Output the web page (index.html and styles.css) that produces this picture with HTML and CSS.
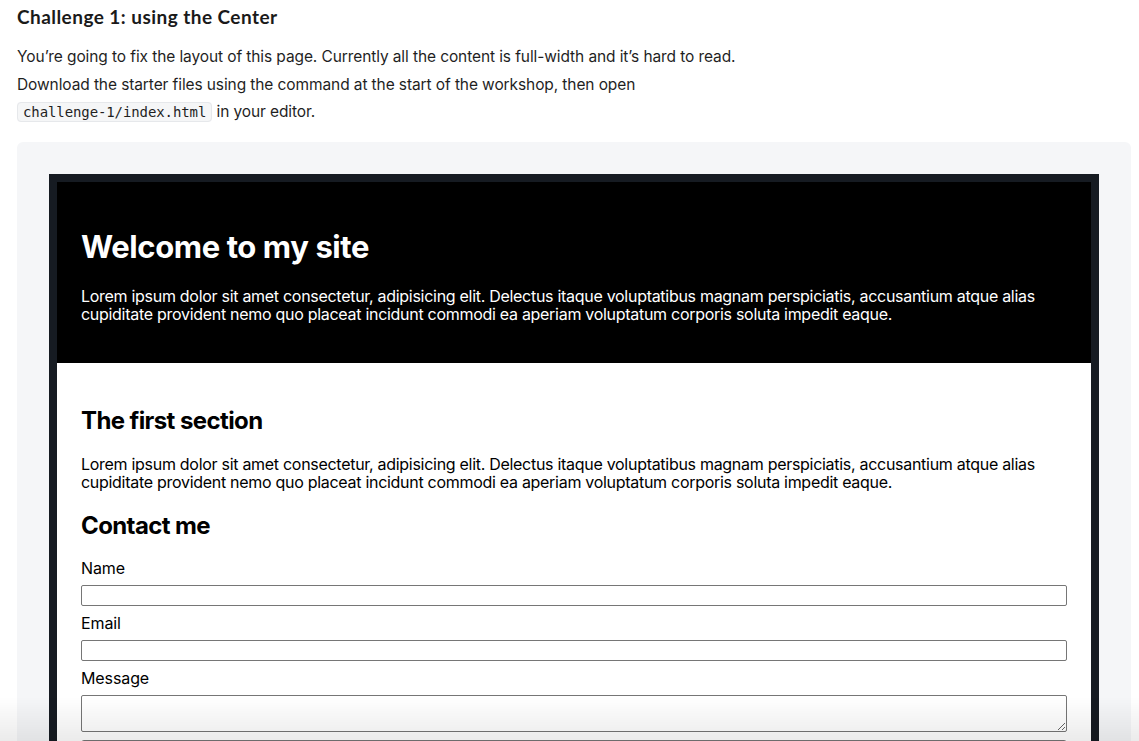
FILE: index.html
```html
<!DOCTYPE html>
<html lang="en">
<head>
<meta charset="utf-8">
<title>Challenge 1</title>
<link rel="stylesheet" href="styles.css">
</head>
<body>
<div class="page">
  <h3 class="title">Challenge 1: using the Center</h3>
  <p class="intro">You’re going to fix the layout of this page. Currently all the content is full-width and it’s hard to read.<br>Download the starter files using the command at the start of the workshop, then open<br><code>challenge-1/index.html</code> in your editor.</p>
  <div class="demo">
    <div class="frame">
      <header class="site-header">
        <h1>Welcome to my site</h1>
        <p>Lorem ipsum dolor sit amet consectetur, adipisicing elit. Delectus itaque voluptatibus magnam perspiciatis, accusantium atque alias cupiditate provident nemo quo placeat incidunt commodi ea aperiam voluptatum corporis soluta impedit eaque.</p>
      </header>
      <main class="site-main">
        <h2>The first section</h2>
        <p>Lorem ipsum dolor sit amet consectetur, adipisicing elit. Delectus itaque voluptatibus magnam perspiciatis, accusantium atque alias cupiditate provident nemo quo placeat incidunt commodi ea aperiam voluptatum corporis soluta impedit eaque.</p>
        <h2>Contact me</h2>
        <form class="form">
          <label for="name">Name</label>
          <input id="name" type="text">
          <label for="email">Email</label>
          <input id="email" type="email">
          <label for="msg">Message</label>
          <textarea id="msg"></textarea>
          <button type="button" class="send" aria-label="Send"></button>
        </form>
      </main>
    </div>
  </div>
</div>
<div class="fade"></div>
</body>
</html>
```
FILE: styles.css
```css
html, body {
  margin: 0;
  padding: 0;
  background: #ffffff;
  overflow: hidden;
}
.page {
  padding: 0 8px 0 17px;
  font-family: Inter, "Liberation Sans", sans-serif;
  color: #1f2328;
}
.title {
  margin: 5px 0 0;
  font-family: Lato, "Open Sans", sans-serif;
  font-weight: 700;
  font-size: 19px;
  line-height: 24px;
  letter-spacing: 0.45px;
  color: #1a1a1a;
}
.intro {
  margin: 14px 0 0;
  font-size: 15.5px;
  line-height: 27.5px;
  letter-spacing: -0.1px;
  color: #1f1f1f;
}
.intro code {
  font-family: "DejaVu Sans Mono", monospace;
  font-size: 14px;
  background: #f5f6f7;
  border: 1px solid #e6e8eb;
  border-radius: 4px;
  padding: 1px 5px;
}
.demo {
  margin-top: 15px;
  background: #f5f6f8;
  border-radius: 6px;
  padding: 32px;
  height: 700px;
}
.frame {
  border: 8px solid #161b22;
  background: #fff;
  font-family: Inter, "Liberation Sans", sans-serif;
  color: #000;
  height: 640px;
}
.site-header {
  background: #000;
  color: #fff;
  padding: 24px;
  display: flow-root;
}
.site-header h1 {
  margin: 22px 0 21px;
  font-size: 31px;
  line-height: 38px;
  font-weight: 700;
  letter-spacing: -0.4px;
}
.site-header p,
.site-main p {
  margin: 16px 0;
  font-size: 16px;
  line-height: 18px;
  letter-spacing: -0.29px;
}
.site-main p {
  margin: 20px 0;
}
.site-main {
  padding: 23px 24px 24px;
  display: flow-root;
}
.site-main h2 {
  margin: 21px 0 19px;
  font-size: 24px;
  line-height: 28px;
  font-weight: 700;
  letter-spacing: -0.6px;
}
.form {
  display: flex;
  flex-direction: column;
  gap: 8px;
}
.form label {
  font-size: 16px;
  line-height: 18px;
  letter-spacing: -0.1px;
}
.form input,
.form textarea {
  box-sizing: border-box;
  width: 100%;
  border: 1px solid #767676;
  border-radius: 2px;
  margin: 0;
  font: inherit;
  background: #fff;
}
.form input {
  height: 21px;
}
.form textarea {
  height: 37px;
  resize: vertical;
}
.send {
  box-sizing: border-box;
  width: 100%;
  height: 24px;
  border: 1px solid #767676;
  border-radius: 3px;
  background: #efefef;
  font: inherit;
  font-size: 14px;
}
.fade {
  position: fixed;
  left: 0;
  right: 0;
  bottom: 0;
  height: 44px;
  background: linear-gradient(to bottom, rgba(0,0,0,0), rgba(0,0,0,0.08));
  pointer-events: none;
}
```
